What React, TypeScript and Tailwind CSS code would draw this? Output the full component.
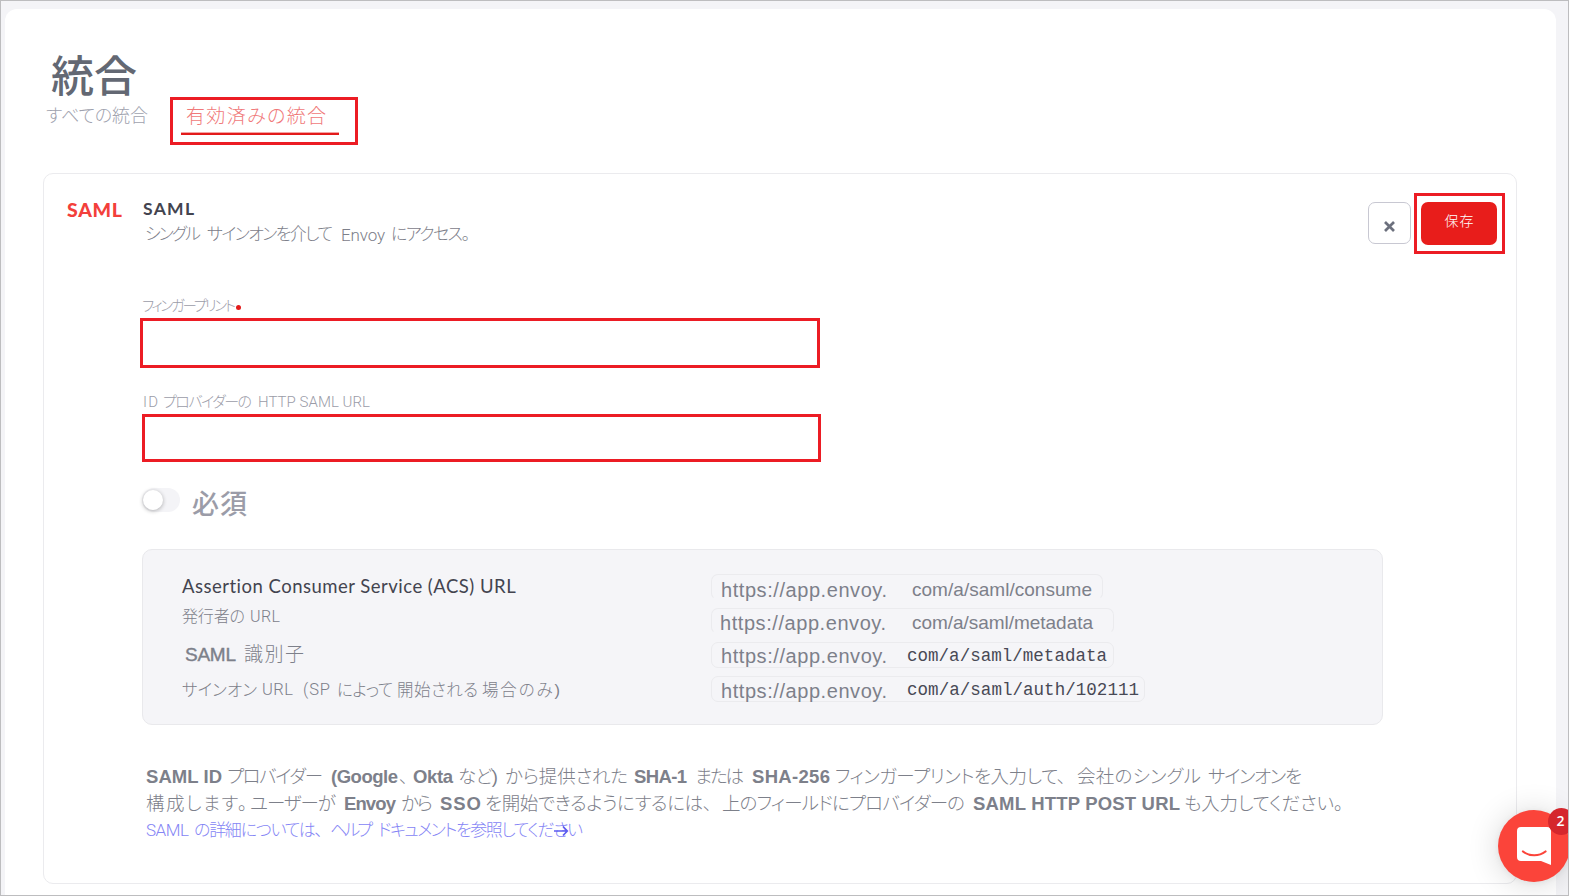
import { useLayoutEffect, useRef, useState } from "react";
import type { ReactNode } from "react";

const cjk = "font-['Liberation_Sans','Noto_Sans_CJK_JP',sans-serif] font-light [font-feature-settings:'palt']";

/** Single run of text tracked so that it fills the width of its box. */
function Run({ className = "", children }: { className?: string; children: string }) {
  const box = useRef<HTMLSpanElement>(null);
  const text = useRef<HTMLSpanElement>(null);
  const [spacing, setSpacing] = useState(0);
  useLayoutEffect(() => {
    if (!box.current || !text.current) return;
    const natural = text.current.getBoundingClientRect().width;
    const count = Array.from(children).length;
    setSpacing((box.current.getBoundingClientRect().width - natural) / Math.max(1, count - 1));
  }, [children]);
  return (
    <span ref={box} className={`block shrink-0 whitespace-pre ${className}`}>
      <span ref={text} style={{ letterSpacing: `${spacing}px` }}>
        {children}
      </span>
    </span>
  );
}

function Chip({ className, children }: { className: string; children: ReactNode }) {
  return (
    <div className={`flex h-[26px] items-center rounded-[7px] border border-[#ebebee] pl-[9px] ${className}`}>
      {children}
    </div>
  );
}

export default function App() {
  return (
    <div className={`relative h-[896px] w-[1569px] overflow-hidden border border-[#bdbdbf] bg-[#f4f4f7] pt-2 pr-3 pl-1 text-[#7d808a] ${cjk}`}>
      <main className="h-[900px] rounded-xl bg-white pl-[38px]">
        <h1 className="flex h-[88px] items-end pl-[8px] text-[43px] leading-[40px] font-medium text-[#636873]">
          <Run className="w-[86px]">統合</Run>
        </h1>
        <nav className="flex h-[48px] items-start">
          <div className="flex pt-[7px] pl-[3px] text-[18px] leading-6 text-[#a0a2ae]">
            <Run className="w-[102px]">すべての統合</Run>
          </div>
          <div className="ml-[22px] h-[48px] w-[188px] border-[3px] border-[#ec1c24] px-2">
            <div className="h-[35px] w-[158px] border-b-2 border-[#e31b1b] pt-[5px] pl-[5px] text-[19px] leading-6 text-[#f0797a] shadow-[inset_0_-1px_0_#f4a4a4]">
              <Run className="w-[140px]">有効済みの統合</Run>
            </div>
          </div>
        </nav>

        <section className="mt-[28px] h-[711px] w-[1474px] rounded-[10px] border border-[#ebebee]">
          <header className="flex h-[81px] pl-[23px]">
            <div className="mt-[24px] w-[76px] font-['Lato',sans-serif] text-[19.5px] leading-6 font-black text-[#f33f3b]">
              <Run className="w-[55px]">SAML</Run>
            </div>
            <div className="w-[1225px] pt-[23px]">
              <h2 className="font-['Lato',sans-serif] text-[17.5px] leading-6 font-bold text-[#43444f]">
                <Run className="w-[51px]">SAML</Run>
              </h2>
              <div className="mt-[2px] flex pl-[2px] text-[17px] leading-6">
                <Run className="w-[56px]">シングル</Run>
                <Run className="ml-[6px] w-[126px]">サインオンを介して</Run>
                <Run className="ml-[8px] w-[44px] font-['Roboto',sans-serif]">Envoy</Run>
                <Run className="ml-[6px] w-[79px]">にアクセス。</Run>
              </div>
            </div>
            <button className="mt-[28px] flex h-[42px] w-[43px] items-center justify-center rounded-[7px] border border-[#c8c8d2] pt-[6px]">
              <svg width="11" height="11" viewBox="0 0 11 11" fill="none" stroke="#6c707d" strokeWidth="2.7">
                <path d="M1 1l9 9M10 1l-9 9" />
              </svg>
            </button>
            <div className="mt-[19px] ml-[3px] h-[61px] w-[91px] border-[3px] border-[#ec1c24] pt-[6px] pl-1">
              <button className="flex h-[43px] w-[76px] justify-center rounded-[7px] bg-[#e81d1b] pt-[9px] text-[14px] leading-5 text-white">
                <Run className="w-[29px]">保存</Run>
              </button>
            </div>
          </header>

          <div className="pl-[96px]">
            <label className="mt-[38px] flex h-[25px] items-center pl-[2px] text-[14.5px] leading-6 text-[#9b9ca8]">
              <Run className="w-[94px]">フィンガープリント</Run>
              <span className="mt-[4px] size-[5px] rounded-full bg-[#e31b1b]" />
            </label>
            <div className="h-[50px] w-[680px] border-[3px] border-[#ec1c24]" />
            <label className="mt-[21px] flex h-[25px] items-center pl-[3px] text-[15px] leading-6 text-[#9b9ca8]">
              <Run className="w-[15px] font-['Roboto',sans-serif]">ID</Run>
              <Run className="ml-[5px] w-[89px]">プロバイダーの</Run>
              <Run className="ml-[6px] w-[112px] font-['Roboto',sans-serif]">HTTP SAML URL</Run>
            </label>
            <div className="ml-[2px] h-[48px] w-[679px] border-[3px] border-[#ec1c24]" />
            <div className="ml-[2px] flex h-[87px] pt-[26px]">
              <span className="h-6 w-[38px] rounded-full bg-[#f4f4f7] p-[2px] pl-[1px]">
                <span className="block size-5 rounded-full bg-white shadow-[0_1px_4px_rgba(0,0,0,0.3)]" />
              </span>
              <span className="ml-[12px] flex text-[27px] leading-[35px] font-medium text-[#9b9ca8]">
                <Run className="w-[55px]">必須</Run>
              </span>
            </div>

            <div className="ml-[2px] flex h-[176px] w-[1241px] rounded-[10px] border border-[#e9e9ec] bg-[#f5f5f8]">
              <div className="w-[568px] pl-[39px]">
                <div className="mt-[24px] font-['Lato',sans-serif] text-[18.5px] leading-6 font-normal text-[#43444f]">
                  <Run className="w-[334px]">Assertion Consumer Service (ACS) URL</Run>
                </div>
                <div className="mt-[7px] flex text-[16px] leading-6">
                  <Run className="w-[63px]">発行者の</Run>
                  <Run className="ml-[5px] w-[30px] font-['Roboto',sans-serif]">URL</Run>
                </div>
                <div className="mt-[14px] flex pl-[3px] text-[19px] leading-6">
                  <Run className="w-[51px] [-webkit-text-stroke:0.4px]">SAML</Run>
                  <Run className="ml-[8px] w-[60px]">識別子</Run>
                </div>
                <div className="mt-[11px] flex text-[16.5px] leading-6">
                  <Run className="w-[75px]">サインオン</Run>
                  <Run className="ml-[5px] w-[31px] font-['Roboto',sans-serif]">URL</Run>
                  <Run className="ml-[10px] w-[27px] font-['Roboto',sans-serif]">(SP</Run>
                  <Run className="ml-[7px] w-[56px]">によって</Run>
                  <Run className="ml-[4px] w-[81px]">開始される</Run>
                  <Run className="ml-[4px] w-[78px]">場合のみ)</Run>
                </div>
              </div>
              <div className="flex flex-col gap-2 pt-[24px] text-xl leading-6 text-[#7d808a]">
                <Chip className="w-[392px] border-b-transparent pt-[5px]">
                  <Run className="w-[166px]">https://app.envoy.</Run>
                  <Run className="ml-[25px] w-[180px] text-[19px]">com/a/saml/consume</Run>
                </Chip>
                <Chip className="w-[403px] border-b-transparent pt-[3px]">
                  <Run className="-ml-px w-[166px]">https://app.envoy.</Run>
                  <Run className="ml-[26px] w-[181px] text-[19px]">com/a/saml/metadata</Run>
                </Chip>
                <Chip className="w-[403px]">
                  <Run className="w-[166px] pt-[2px]">https://app.envoy.</Run>
                  <Run className="ml-[20px] w-[200px] pt-px font-['Liberation_Mono',monospace] text-[17.5px] text-[#484955]">com/a/saml/metadata</Run>
                </Chip>
                <Chip className="w-[434px]">
                  <Run className="w-[166px] pt-[4px]">https://app.envoy.</Run>
                  <Run className="ml-[20px] w-[232px] pt-px font-['Liberation_Mono',monospace] text-[17.5px] text-[#484955]">com/a/saml/auth/102111</Run>
                </Chip>
              </div>
            </div>

            <div className="mt-[38px] pl-[6px] text-[18.5px] leading-[27px]">
              <div className="flex">
                <Run className="w-[76px] font-bold">SAML ID</Run>
                <Run className="ml-[5px] w-[96px]">プロバイダー</Run>
                <Run className="ml-[8px] w-[67px] font-bold">(Google</Run>
                <Run className="ml-[1px] w-[6px]">、</Run>
                <Run className="ml-[8px] w-[40px] font-bold">Okta</Run>
                <Run className="ml-[5px] w-[40px]">など)</Run>
                <Run className="ml-[7px] w-[123px]">から提供された</Run>
                <Run className="ml-[6px] w-[53px] font-bold">SHA-1</Run>
                <Run className="ml-[8px] w-[49px]">または</Run>
                <Run className="ml-[8px] w-[78px] font-bold">SHA-256</Run>
                <Run className="ml-[5px] w-[231px]">フィンガープリントを入力して、</Run>
                <Run className="ml-[11px] w-[124px]">会社のシングル</Run>
                <Run className="ml-[7px] w-[94px]">サインオンを</Run>
              </div>
              <div className="flex">
                <Run className="w-[101px]">構成します。</Run>
                <Run className="ml-[3px] w-[86px]">ユーザーが</Run>
                <Run className="ml-[8px] w-[52px] font-bold">Envoy</Run>
                <Run className="ml-[5px] w-[32px]">から</Run>
                <Run className="ml-[7px] w-[41px] font-bold">SSO</Run>
                <Run className="ml-[4px] w-[227px]">を開始できるようにするには、</Run>
                <Run className="ml-[10px] w-[243px]">上のフィールドにプロバイダーの</Run>
                <Run className="ml-[8px] w-[207px] font-bold">SAML HTTP POST URL</Run>
                <Run className="ml-[4px] w-[159px]">も入力してください。</Run>
              </div>
              <a className="flex text-[17px] text-[#8585f5]">
                <Run className="w-[43px] font-['Roboto',sans-serif]">SAML</Run>
                <Run className="ml-[5px] w-[129px]">の詳細については、</Run>
                <Run className="ml-[7px] w-[43px]">ヘルプ</Run>
                <Run className="ml-[5px] w-[205px]">ドキュメントを参照してください</Run>
                <svg className="mt-[7px] -ml-[29px] shrink-0" width="15" height="14" viewBox="0 0 15 14" fill="none" stroke="#5b5bf0" strokeWidth="1.7">
                  <path d="M0 7h13M9 2.500L13.300 7l-4.300 4.500" />
                </svg>
              </a>
            </div>
          </div>
        </section>
      </main>

      <button className="absolute top-[809px] left-[1497px] size-[72px] rounded-full bg-[#fb443a] shadow-[0_1px_6px_rgba(0,0,0,0.06),0_2px_32px_rgba(0,0,0,0.16)]">
        <svg className="absolute top-[17px] left-[19px]" width="34" height="39" viewBox="0 0 34 39" fill="none">
          <path d="M4 0h26a4 4 0 0 1 4 4v34l-10-4H4a4 4 0 0 1-4-4V4a4 4 0 0 1 4-4z" fill="#fff" />
          <path d="M6 24.500c6.500 5 16 5 22.500 0" stroke="#fb443a" strokeWidth="2.200" strokeLinecap="round" />
        </svg>
      </button>
      <span className="absolute top-[807px] left-[1547px] flex size-[27px] items-center justify-center rounded-full bg-[#d5272d] pr-[2px] pb-[3px] font-['Open_Sans',sans-serif] text-[14px] font-semibold text-white">
        2
      </span>
    </div>
  );
}
